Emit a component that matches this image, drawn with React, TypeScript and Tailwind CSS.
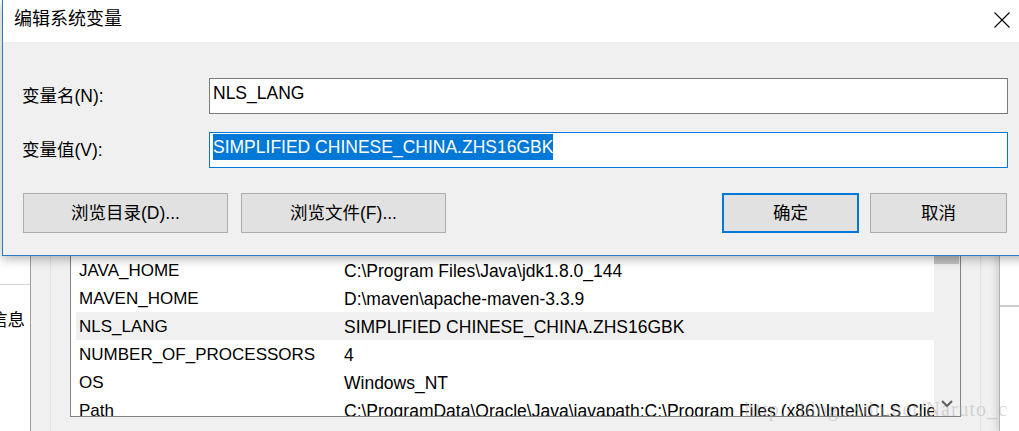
import React from "react";

const rows: [string, string][] = [
  ["ComSpec", "C:\\Windows\\system32\\cmd.exe"],
  ["JAVA_HOME", "C:\\Program Files\\Java\\jdk1.8.0_144"],
  ["MAVEN_HOME", "D:\\maven\\apache-maven-3.3.9"],
  ["NLS_LANG", "SIMPLIFIED CHINESE_CHINA.ZHS16GBK"],
  ["NUMBER_OF_PROCESSORS", "4"],
  ["OS", "Windows_NT"],
  [
    "Path",
    "C:\\ProgramData\\Oracle\\Java\\javapath;C:\\Program Files (x86)\\Intel\\iCLS Client\\;C:\\Program Files\\Intel\\iCLS Client\\",
  ],
];

function Btn({ children, primary }: { children: React.ReactNode; primary?: boolean }) {
  return (
    <div
      className={
        "h-[40px] flex items-center justify-center bg-[#e1e1e1] " +
        (primary ? "border-2 border-[#0078d7]" : "border border-[#adadad]")
      }
    >
      {children}
    </div>
  );
}

export default function App() {
  return (
    <div className="relative w-[1019px] h-[431px] overflow-hidden bg-[#f0f0f0] text-black text-[17.5px] font-['Liberation_Sans','Noto_Sans_CJK_SC',sans-serif]">
      {/* background window */}
      <div className="flex h-full">
        <div className="w-[31px] shrink-0 bg-white border-r border-[#a0a0a0] flex flex-col overflow-hidden">
          <div className="h-[285px] shrink-0 border-b border-[#d5d5d5]" />
          <div className="mt-[25px] ml-[-10px] whitespace-nowrap leading-[20px]">信息</div>
        </div>
        <div className="w-[39px] shrink-0 flex">
          <div className="w-[20px] border-r border-[#e0e0e0]" />
        </div>
        <div className="w-[891px] shrink-0 pt-[227px]">
          <div className="h-[190px] border border-[#828282] bg-white flex">
            <div className="flex-1 overflow-hidden">
              {rows.map(([name, value]) => (
                <div
                  key={name}
                  className={
                    "h-[28px] ml-[5px] pl-[3px] pt-[2px] flex items-center whitespace-nowrap " +
                    (name === "NLS_LANG" ? "bg-[#f0f0f0]" : "")
                  }
                >
                  <div className="w-[265px] shrink-0 text-[17px]">{name}</div>
                  <div>{value}</div>
                </div>
              ))}
            </div>
            <div className="w-[26px] shrink-0 bg-[#f0f0f0] flex flex-col">
              <div className="mt-[12px] h-[24px] w-[25px] bg-[#c2c2c2]" />
              <div className="mt-auto h-[24px] flex items-center justify-center">
                <svg width="12" height="8" viewBox="0 0 12 8">
                  <polyline points="1,1 6,6 11,1" fill="none" stroke="#606060" strokeWidth="2" />
                </svg>
              </div>
            </div>
          </div>
        </div>
        <div className="w-[38px] shrink-0 flex">
          <div className="w-[20px] border-r border-[#e0e0e0]" />
        </div>
        <div className="flex-1 bg-white border-l border-[#b4b4b4] shadow-[-3px_0_6px_rgba(0,0,0,0.12)]">
          <div className="h-[307px] border-b-2 border-[#cccccc]" />
        </div>
      </div>

      {/* watermark */}
      <div className="absolute right-[11px] top-[397px] text-[20px] leading-[24px] tracking-[1px] whitespace-nowrap text-[rgba(170,170,170,0.45)] font-['Liberation_Serif',serif]">
        http://blog.csdn.net/Naruto_c
      </div>

      {/* dialog */}
      <div className="absolute left-[2px] top-0 w-[1028px] h-[256px] border-l border-b border-[#2b7bcb] flex flex-col shadow-[0_3px_10px_rgba(0,0,0,0.3)]">
        <div className="h-[42px] shrink-0 bg-white flex items-start justify-between">
          <div className="ml-[11px] mt-[8px] text-[18px] leading-[22px]">编辑系统变量</div>
          <svg className="mt-[12px] mr-[20px]" width="16" height="16" viewBox="0 0 16 16">
            <path d="M0.5 0.5 L15.5 15.5 M15.5 0.5 L0.5 15.5" stroke="#000" strokeWidth="1.1" fill="none" />
          </svg>
        </div>
        <div className="flex-1 bg-[#f0f0f0] pt-[36px] pl-[19px] pr-[22px]">
          <div className="flex items-center h-[36px]">
            <div className="w-[187px] shrink-0">变量名(N):</div>
            <div className="flex-1 h-[36px] border border-[#7a7a7a] bg-white pl-[3px] pt-[1px] leading-[26px] whitespace-nowrap">
              NLS_LANG
            </div>
          </div>
          <div className="flex items-center h-[36px] mt-[18px]">
            <div className="w-[187px] shrink-0">变量值(V):</div>
            <div className="flex-1 h-[36px] border border-[#0078d7] bg-white pl-[3px] pt-[1px] leading-[26px] whitespace-nowrap">
              <span className="bg-[#0078d7] text-white inline-block">SIMPLIFIED CHINESE_CHINA.ZHS16GBK</span>
            </div>
          </div>
          <div className="mt-[25px] ml-[1px] mr-[1px] flex justify-between">
            <div className="flex gap-[13px]">
              <div className="w-[205px]">
                <Btn>浏览目录(D)...</Btn>
              </div>
              <div className="w-[205px]">
                <Btn>浏览文件(F)...</Btn>
              </div>
            </div>
            <div className="flex gap-[11px]">
              <div className="w-[137px]">
                <Btn primary>确定</Btn>
              </div>
              <div className="w-[137px]">
                <Btn>取消</Btn>
              </div>
            </div>
          </div>
        </div>
      </div>
    </div>
  );
}
